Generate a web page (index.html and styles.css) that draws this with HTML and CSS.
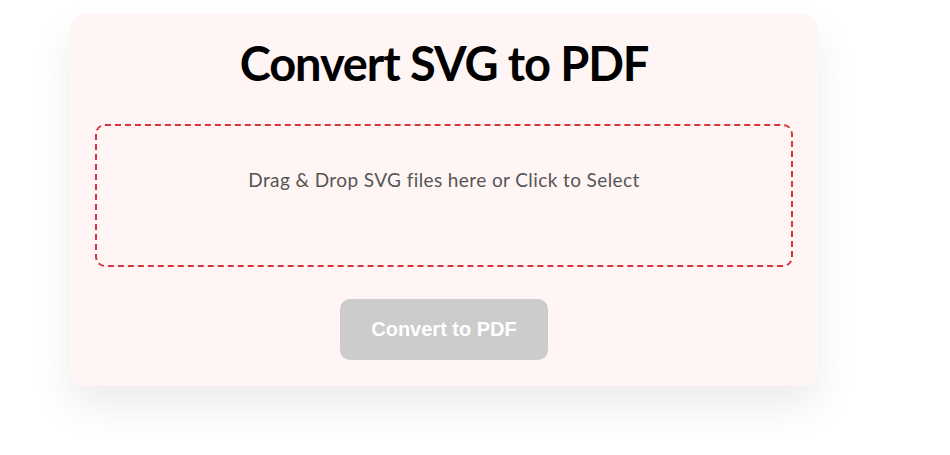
FILE: index.html
```html
<!DOCTYPE html>
<html>
<head>
<meta charset="utf-8">
<link rel="stylesheet" href="styles.css">
</head>
<body>
<div class="page">
  <div class="card">
    <h1 class="title">Convert SVG to PDF</h1>
    <div class="dropzone">
      <p class="drop-text">Drag &amp; Drop SVG files here or Click to Select</p>
    </div>
    <div class="actions">
      <button class="convert-btn" disabled>Convert to PDF</button>
    </div>
  </div>
</div>
</body>
</html>
```
FILE: styles.css
```css
html, body {
  margin: 0;
  padding: 0;
  background: #ffffff;
}
.page {
  padding: 14px 0 80px 70px;
}
.card {
  box-sizing: border-box;
  width: 748px;
  background: #fff5f5;
  border-radius: 16px;
  padding: 21px 25px 26px;
  box-shadow: 0 20px 40px rgba(0, 0, 0, 0.08);
  font-family: Lato, "Noto Sans", sans-serif;
}
.title {
  margin: 0 0 31px;
  text-align: center;
  font-size: 47px;
  line-height: 57.6px;
  font-weight: 700;
  letter-spacing: -1.1px;
  color: #000;
}
.dropzone {
  box-sizing: border-box;
  height: 143px;
  border: 2px dashed #d9343a;
  border-radius: 10px;
  padding-top: 43px;
  text-align: center;
}
.drop-text {
  margin: 0;
  font-size: 19px;
  line-height: 22px;
  letter-spacing: 0.4px;
  color: #555;
}
.actions {
  display: flex;
  justify-content: center;
  margin-top: 32px;
}
.convert-btn {
  font-family: "Liberation Sans", Arial, sans-serif;
  font-weight: 700;
  font-size: 20px;
  color: #fff;
  background: #cccccc;
  border: none;
  border-radius: 10px;
  padding: 19px 31px;
  line-height: 23px;
}
```
